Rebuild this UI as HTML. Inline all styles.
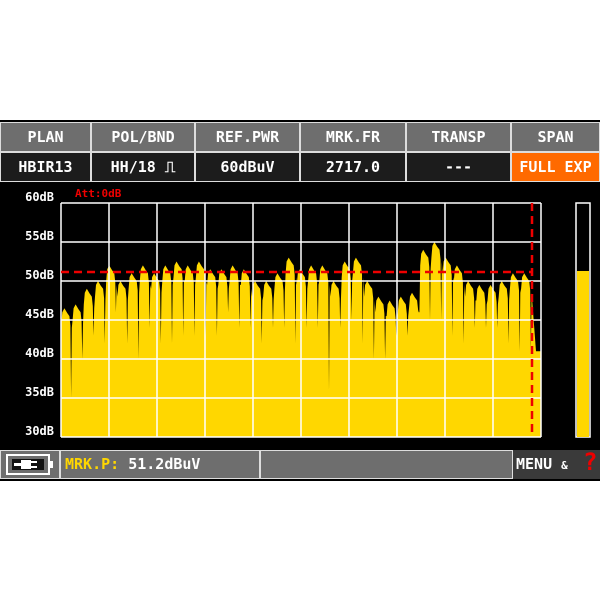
<!DOCTYPE html>
<html><head><meta charset="utf-8"><style>
body{margin:0;width:600px;height:600px;background:#fff;position:relative;overflow:hidden;font-family:"DejaVu Sans Mono","Liberation Mono",monospace;font-weight:bold}
#scr{position:absolute;left:0;top:120px;width:600px;height:361px;background:#000}
.c{position:absolute;box-sizing:border-box;color:#fff;font-size:15px;text-align:center;line-height:28px}
.g{background:#6e6e6e;border:1px solid #ddd}
.d{background:#1c1c1c;border:1px solid #ddd}
</style></head><body>
<div id="scr"></div>
<div class="c g" style="left:0;top:122px;width:91px;height:30px">PLAN</div>
<div class="c g" style="left:91px;top:122px;width:104px;height:30px">POL/BND</div>
<div class="c g" style="left:195px;top:122px;width:105px;height:30px">REF.PWR</div>
<div class="c g" style="left:300px;top:122px;width:106px;height:30px">MRK.FR</div>
<div class="c g" style="left:406px;top:122px;width:105px;height:30px">TRANSP</div>
<div class="c g" style="left:511px;top:122px;width:89px;height:30px">SPAN</div>
<div class="c d" style="left:0;top:152px;width:91px;height:30px">HBIR13</div>
<div class="c d" style="left:91px;top:152px;width:104px;height:30px">HH/18 &#x238D;</div>
<div class="c d" style="left:195px;top:152px;width:105px;height:30px">60dBuV</div>
<div class="c d" style="left:300px;top:152px;width:106px;height:30px">2717.0</div>
<div class="c d" style="left:406px;top:152px;width:105px;height:30px">---</div>
<div class="c" style="left:511px;top:152px;width:89px;height:30px;background:#ff6a00;border:1px solid #ddd">FULL EXP</div>
<svg id="sv" style="position:absolute;left:0;top:0" width="600" height="600" font-family="DejaVu Sans Mono,Liberation Mono,monospace" font-weight="bold" font-size="12">
<text x="75" y="197" fill="#e00" font-size="11">Att:0dB</text>
<g fill="#fff" text-anchor="end">
<text x="54" y="201">60dB</text><text x="54" y="240">55dB</text><text x="54" y="279">50dB</text><text x="54" y="318">45dB</text><text x="54" y="357">40dB</text><text x="54" y="396">35dB</text><text x="54" y="435">30dB</text></g>
<polygon id="sp" fill="#ffd700"/>
<g id="grid" stroke="#fff" stroke-width="1.5" fill="none"></g>
<line x1="61" y1="272" x2="532" y2="272" stroke="#e00" stroke-width="2.5" stroke-dasharray="8,5"/>
<line x1="532" y1="203" x2="532" y2="437" stroke="#e00" stroke-width="2.5" stroke-dasharray="8,5"/>
<rect x="576" y="203" width="14" height="234" fill="#000" stroke="#fff" stroke-width="1.5"/>
<rect x="577" y="271" width="12" height="166" fill="#ffd700"/>
</svg>
<div class="c" style="left:0;top:450px;width:60px;height:29px;background:#6e6e6e;border:1px solid #ddd">
<svg width="58" height="27" style="position:absolute;left:0;top:0"><rect x="6" y="4" width="42" height="19" fill="none" stroke="#fff" stroke-width="2"/><rect x="48" y="10" width="4" height="7" fill="#fff"/><rect x="11" y="8" width="32" height="11" fill="#111"/><rect x="20" y="9" width="10" height="9" fill="#fff"/><rect x="13" y="12" width="7" height="3" fill="#fff"/><rect x="30" y="10" width="6" height="2" fill="#fff"/><rect x="30" y="15" width="6" height="2" fill="#fff"/></svg></div>
<div class="c" style="left:60px;top:450px;width:200px;height:29px;background:#6e6e6e;border:1px solid #ddd;text-align:left;padding-left:4px;font-size:15px;line-height:27px"><span style="color:#ffd700">MRK.P:</span>  51.2dBuV</div>
<div class="c" style="left:260px;top:450px;width:253px;height:29px;background:#6e6e6e;border:1px solid #ddd"></div>
<div class="c" style="left:513px;top:450px;width:87px;height:29px;background:#3a3a3a;text-align:left;padding-left:3px;line-height:29px">MENU <span style="font-size:11px">&amp;</span><span style="color:#e00;font-size:24px;position:absolute;left:70px;top:-2px">?</span></div>
<script>
var Y=function(d){return 437-(d-30)*7.8};
var P=[46.5,47,49,50,52,50,51,52,51,52,52.5,52,52.5,51.5,51.5,52,51.5,50,50,51,53,51.5,52,52,50,52.5,53,50,48,47.5,48,48.5,54,55,53,52,50,49.5,49.5,50,51,51];
var D=[35,40,43,42,46,42,40,44,42,42,43,43,43,43,46,44,44,42,44,44,42,44,44,36,44,45,42,40,40,43,43,46,45,45,43,42,44,44,44,42,41,41];
var n=P.length,w=471/n,pts=["61,437","61,"+Y(34)],x=61;
for(var i=0;i<n;i++){var p=P[i],d=D[i];
var f=[[0.03,p-2],[0.12,p-0.5],[0.3,p],[0.55,p-0.6],[0.75,p-1],[0.84,p-2.2],[0.9,d],[0.96,p-2.5]];
for(var j=0;j<f.length;j++)pts.push((x+w*f[j][0]).toFixed(1)+","+Y(f[j][1]).toFixed(1));
x+=w;}
pts.push("536,"+Y(41));pts.push("541,"+Y(41));pts.push("541,437");
document.getElementById("sp").setAttribute("points",pts.join(" "));
var g=document.getElementById("grid"),s="";
for(var k=0;k<=10;k++){var gx=61+k*48;s+='<line x1="'+gx+'" y1="203" x2="'+gx+'" y2="437"/>';}
for(var k=0;k<=6;k++){var gy=203+k*39;s+='<line x1="61" y1="'+gy+'" x2="541" y2="'+gy+'"/>';}
g.innerHTML=s;
</script>
</body></html>
